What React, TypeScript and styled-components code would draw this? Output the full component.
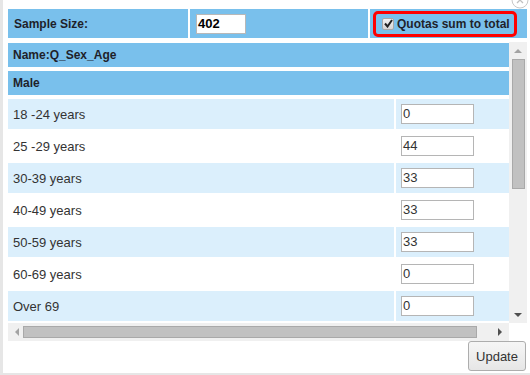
import styled, { createGlobalStyle } from "styled-components";

const GlobalStyle = createGlobalStyle`
  html, body {
    margin: 0;
    padding: 0;
    background: #ffffff;
    font-family: "Liberation Sans", Arial, sans-serif;
  }
`;

const HEAD_BLUE = "#79c0ec";
const LIGHT_BLUE = "#dbeffc";

const Dialog = styled.div`
  position: relative;
  width: 530px;
  height: 375px;
  box-sizing: border-box;
  border-left: 3px solid #e6e6e6;
  border-bottom: 2px solid #e6e6e6;
  padding: 9px 0 0 5px;
  background: #fff;
  overflow: hidden;
`;

const CloseIcon = styled.svg`
  position: absolute;
  top: -9px;
  right: 1px;
`;

const HeaderBar = styled.div`
  display: flex;
  gap: 2px;
  height: 29px;
  width: 519px;
`;

const HeadCell = styled.div<{ $w?: number }>`
  background: ${HEAD_BLUE};
  display: flex;
  align-items: center;
  box-sizing: border-box;
  ${(p) => (p.$w ? `width: ${p.$w}px;` : "flex: 1;")}
  padding: 0 6px;
  font-size: 12px;
  font-weight: bold;
  color: #1f1f2a;
`;

const SizeInput = styled.div`
  width: 50px;
  height: 20px;
  box-sizing: border-box;
  border: 1px solid #b8b8b8;
  background: #fff;
  font-size: 13px;
  font-weight: bold;
  color: #000;
  line-height: 18px;
  padding-left: 1px;
`;

const QuotaToggle = styled.label`
  display: flex;
  align-items: center;
  gap: 3px;
  width: 144px;
  height: 26px;
  box-sizing: border-box;
  margin-left: -3px;
  border: 3px solid #ff0000;
  border-radius: 5px;
  padding-left: 6px;
  font-size: 12px;
  font-weight: bold;
  color: #1f1f2a;
  white-space: nowrap;
`;

const CheckBox = styled.span`
  display: inline-flex;
  align-items: center;
  justify-content: center;
  width: 12px;
  height: 12px;
  box-sizing: border-box;
  border: 1px solid #a8a8a8;
  border-radius: 2px;
  background: linear-gradient(#f2f2f2, #d6d6d6);
`;

const ScrollFrame = styled.div`
  margin-top: 4px;
  display: grid;
  grid-template-columns: 501px 18px;
  grid-template-rows: 281px 18px;
`;

const Viewport = styled.div`
  overflow: hidden;
  padding-top: 1px;
`;

const Content = styled.div`
  width: 520px;
`;

const Band = styled.div`
  background: ${HEAD_BLUE};
  height: 24px;
  margin-bottom: 4px;
  display: flex;
  align-items: center;
  padding-left: 5px;
  font-size: 12px;
  font-weight: bold;
  color: #1f1f2a;
`;

const QuotaTable = styled.div`
  display: grid;
  grid-template-columns: 386px 1fr;
  column-gap: 2px;
  row-gap: 2px;
`;

const LabelCell = styled.div<{ $alt: boolean }>`
  height: 30px;
  background: ${(p) => (p.$alt ? LIGHT_BLUE : "#fff")};
  display: flex;
  align-items: center;
  padding-left: 5px;
  font-size: 13px;
  color: #333;
`;

const ValueCell = styled(LabelCell)`
  padding-left: 5px;
`;

const ValueInput = styled.div`
  width: 73px;
  height: 20px;
  box-sizing: border-box;
  border: 1px solid #b5b5b5;
  background: #fff;
  font-size: 13px;
  color: #333;
  line-height: 18px;
  padding-left: 1px;
`;

const VTrack = styled.div`
  background: #f0f0f0;
  display: flex;
  flex-direction: column;
  align-items: center;
`;

const HTrack = styled.div`
  background: #f0f0f0;
  display: flex;
  align-items: center;
`;

const ArrowBox = styled.div`
  width: 18px;
  height: 17px;
  display: flex;
  align-items: center;
  justify-content: center;
  flex: none;
`;

const Arrow = styled.span<{ $dir: "up" | "down" | "left" | "right"; $dim?: boolean }>`
  width: 0;
  height: 0;
  border: 4px solid transparent;
  ${(p) => {
    const c = p.$dim ? "#a3a3a3" : "#505050";
    if (p.$dir === "up") return `border-bottom-color: ${c}; border-top-width: 0;`;
    if (p.$dir === "down") return `border-top-color: ${c}; border-bottom-width: 0;`;
    if (p.$dir === "left") return `border-right-color: ${c}; border-left-width: 0;`;
    return `border-left-color: ${c}; border-right-width: 0;`;
  }}
`;

const VThumb = styled.div`
  width: 13px;
  height: 130px;
  background: #c1c1c1;
  border: 1px solid #a9a9a9;
  box-sizing: border-box;
`;

const HThumb = styled.div`
  width: 454px;
  height: 12px;
  background: #c1c1c1;
  border: 1px solid #a9a9a9;
  box-sizing: border-box;
  margin-left: -3px;
`;

const Spacer = styled.div`
  flex: 1;
`;

const Corner = styled.div`
  background: #fff;
`;

const Footer = styled.div`
  display: flex;
  justify-content: flex-end;
  padding-right: 4px;
`;

const UpdateButton = styled.button`
  width: 58px;
  height: 30px;
  margin: 0;
  border: 1px solid #adadad;
  border-radius: 3px;
  background: linear-gradient(#f6f6f6, #e6e6e6);
  font-family: "Liberation Sans", Arial, sans-serif;
  font-size: 13px;
  color: #333;
  padding: 0;
`;

const rows = [
  { label: "18 -24 years", value: "0" },
  { label: "25 -29 years", value: "44" },
  { label: "30-39 years", value: "33" },
  { label: "40-49 years", value: "33" },
  { label: "50-59 years", value: "33" },
  { label: "60-69 years", value: "0" },
  { label: "Over 69", value: "0" },
];

export default function App() {
  return (
    <>
      <GlobalStyle />
      <Dialog>
        <CloseIcon width="18" height="18" viewBox="0 0 18 18">
          <circle cx="9" cy="9" r="8" fill="#fff" stroke="#c8c8c8" />
          <path d="M6 6 L12 12 M12 6 L6 12" stroke="#c0c0c0" strokeWidth="1.3" />
        </CloseIcon>
        <HeaderBar>
          <HeadCell $w={180}>Sample Size:</HeadCell>
          <HeadCell $w={178}>
            <SizeInput>402</SizeInput>
          </HeadCell>
          <HeadCell>
            <QuotaToggle>
              <CheckBox>
                <svg width="9" height="9" viewBox="0 0 9 9">
                  <path d="M1 4.5 L3.5 7.5 L8 1" fill="none" stroke="#222" strokeWidth="2" />
                </svg>
              </CheckBox>
              Quotas sum to total
            </QuotaToggle>
          </HeadCell>
        </HeaderBar>
        <ScrollFrame>
          <Viewport>
            <Content>
              <Band>Name:Q_Sex_Age</Band>
              <Band>Male</Band>
              <QuotaTable>
                {rows.flatMap((r, i) => [
                  <LabelCell key={r.label} $alt={i % 2 === 0}>
                    {r.label}
                  </LabelCell>,
                  <ValueCell key={r.label + "-v"} $alt={i % 2 === 0}>
                    <ValueInput>{r.value}</ValueInput>
                  </ValueCell>,
                ])}
              </QuotaTable>
            </Content>
          </Viewport>
          <VTrack>
            <ArrowBox>
              <Arrow $dir="up" $dim />
            </ArrowBox>
            <VThumb />
            <Spacer />
            <ArrowBox>
              <Arrow $dir="down" />
            </ArrowBox>
          </VTrack>
          <HTrack>
            <ArrowBox>
              <Arrow $dir="left" $dim />
            </ArrowBox>
            <HThumb />
            <Spacer />
            <ArrowBox>
              <Arrow $dir="right" />
            </ArrowBox>
          </HTrack>
          <Corner />
        </ScrollFrame>
        <Footer>
          <UpdateButton>Update</UpdateButton>
        </Footer>
      </Dialog>
    </>
  );
}
